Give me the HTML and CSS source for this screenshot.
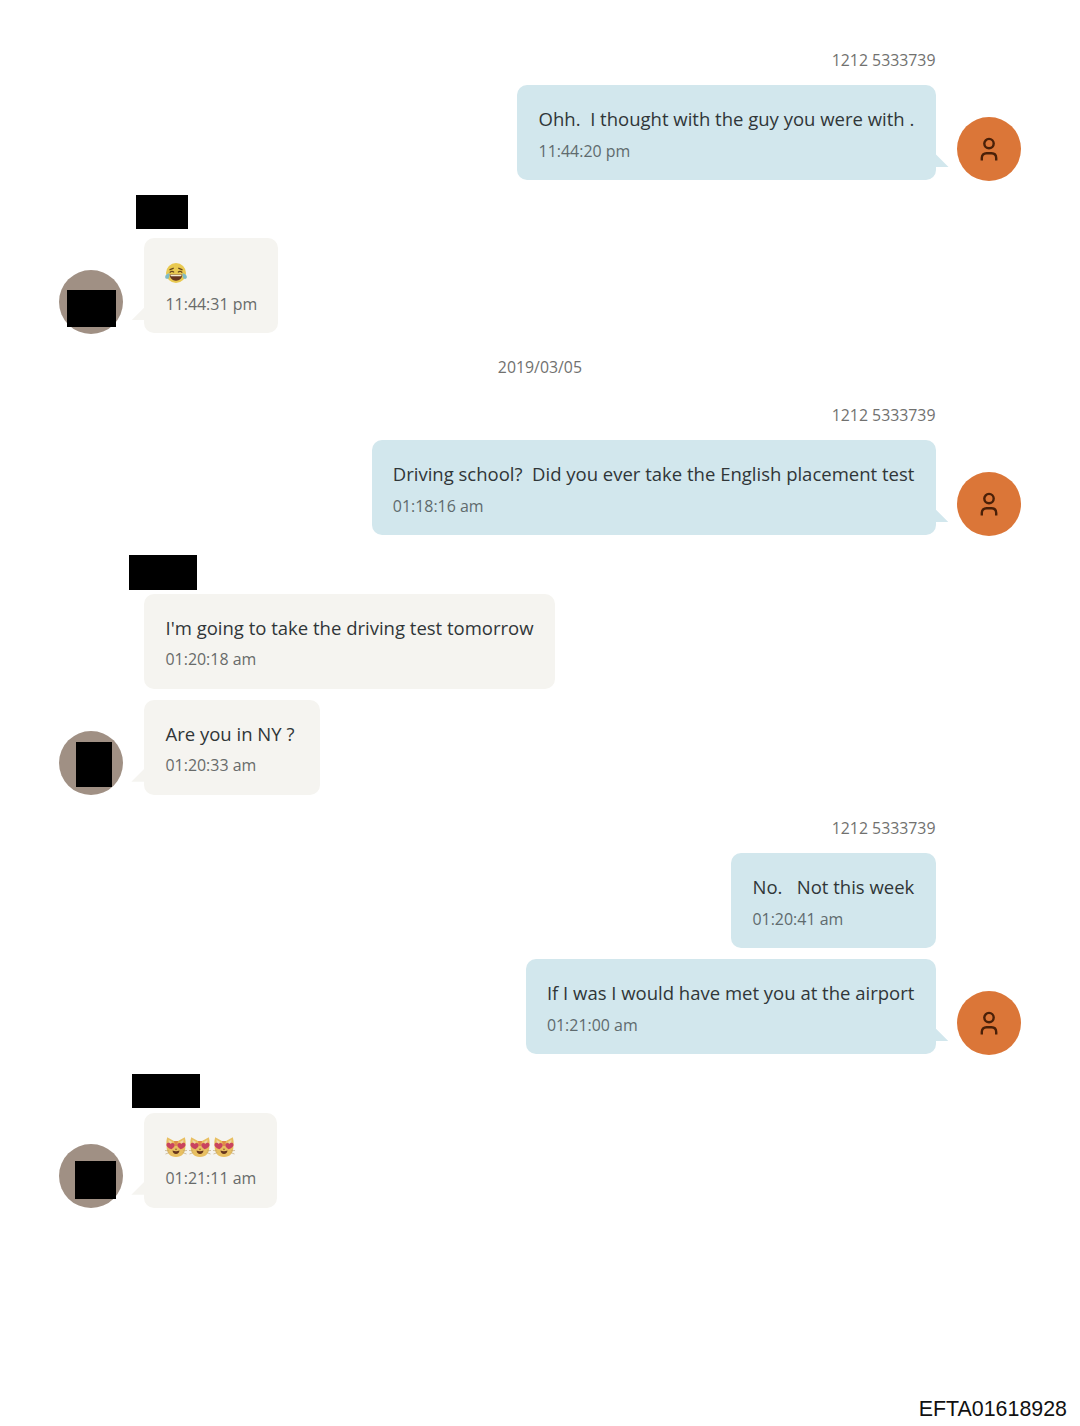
FILE: index.html
```html
<!DOCTYPE html>
<html lang="en">
<head>
<meta charset="utf-8">
<title>Messages</title>
<link rel="stylesheet" href="styles.css">
</head>
<body>
<svg class="defs" width="0" height="0" aria-hidden="true">
  <symbol id="person" viewBox="0 0 18 24">
    <circle cx="9" cy="6.6" r="4.700"/>
    <path d="M1.800 23.500v-2.500c0-3.200 2-4.800 4.700-4.800h5c2.700 0 4.700 1.600 4.700 4.800v2.500"/>
  </symbol>
  <symbol id="joy" viewBox="0 0 22 22">
    <circle cx="11" cy="11" r="10" fill="#e9c950"/>
    <path d="M4.500 7.800l4.200-1.600M13.300 6.200l4.200 1.600M4.800 10.600c1-1.700 3-1.700 4.200-.2M13 10.400c1.200-1.500 3.200-1.500 4.200.2" fill="none" stroke="#65451d" stroke-width="1.3"/>
    <path d="M4.600 12.500h12.800c-.5 4-2.800 6.200-6.400 6.200s-5.900-2.200-6.400-6.200z" fill="#66351d"/>
    <path d="M5.300 12.700h11.400l-.5 1.600H5.800z" fill="#f4ead0"/>
    <path d="M4.500 11.200C1 11.600-.3 14 .3 15.800c.8 2 3.600 1.300 4-1.100zM17.500 11.200c3.500.4 4.800 2.800 4.200 4.600-.8 2-3.600 1.300-4-1.100z" fill="#7fbcc5"/>
  </symbol>
  <symbol id="cat" viewBox="0 0 22 22">
    <path d="M2.200 1.200L9 5h4l6.800-3.800c1 3.500 1 6 .6 9.300C20.400 17.300 17 21 11 21S1.600 17.300 1.600 10.500c-.4-3.300-.4-5.800.6-9.300z" fill="#e8bf61"/>
    <path d="M3.500 3.700l3.700 2.200-3.300 3zM18.500 3.700l-3.700 2.200 3.300 3z" fill="#f0d7a5"/>
    <path d="M9 5h4l-1 5h-2z" fill="#df8b48"/>
    <path d="M6.400 13.300C2.500 11.800.9 9.800 1.600 7.900c.8-1.800 3.200-1.500 4 .2C7 6.300 9.600 6.800 9.700 9c0 1.600-1.300 3-3.300 4.300zM15.600 13.300c3.900-1.500 5.500-3.500 4.800-5.400-.8-1.800-3.200-1.500-4 .2C15 6.300 12.400 6.800 12.300 9c0 1.600 1.300 3 3.300 4.300z" fill="#c9435f"/>
    <path d="M7.500 14.600c2.300.8 4.700.8 7 0-.3 2.300-1.400 3.500-3.500 3.500s-3.200-1.200-3.500-3.500z" fill="#66351d"/>
    <path d="M9.800 12.700h2.400L11 14.200z" fill="#8b4d28"/>
    <path d="M0 14.500l4 .3M.5 18l3.800-1.400M22 14.500l-4 .3M21.500 18l-3.800-1.400" stroke="#b99c68" stroke-width=".6"/>
  </symbol>
</svg>
<main class="chat">
  <section class="group sent">
    <div class="name">1212 5333739</div>
    <div class="thread">
      <div class="bubble tail"><p class="text">Ohh.&nbsp; I thought with the guy you were with .</p><time>11:44:20 pm</time></div>
    </div>
    <div class="avatar"><svg><use href="#person"/></svg></div>
  </section>

  <section class="group received">
    <div class="name"><span class="redaction name-a"></span></div>
    <div class="avatar"><span class="redaction face-a"></span></div>
    <div class="thread">
      <div class="bubble tail"><p class="text emoji"><svg><use href="#joy"/></svg></p><time>11:44:31 pm</time></div>
    </div>
  </section>

  <div class="date">2019/03/05</div>

  <section class="group sent">
    <div class="name">1212 5333739</div>
    <div class="thread">
      <div class="bubble tail"><p class="text">Driving school?&nbsp; Did you ever take the English placement test</p><time>01:18:16 am</time></div>
    </div>
    <div class="avatar"><svg><use href="#person"/></svg></div>
  </section>

  <section class="group received">
    <div class="name"><span class="redaction name-b"></span></div>
    <div class="avatar"><span class="redaction face-b"></span></div>
    <div class="thread">
      <div class="bubble"><p class="text">I'm going to take the driving test tomorrow</p><time>01:20:18 am</time></div>
      <div class="bubble tail"><p class="text">Are you in NY ?&nbsp;</p><time>01:20:33 am</time></div>
    </div>
  </section>

  <section class="group sent">
    <div class="name">1212 5333739</div>
    <div class="thread">
      <div class="bubble"><p class="text">No.&nbsp;&nbsp; Not this week</p><time>01:20:41 am</time></div>
      <div class="bubble tail"><p class="text">If I was I would have met you at the airport</p><time>01:21:00 am</time></div>
    </div>
    <div class="avatar"><svg><use href="#person"/></svg></div>
  </section>

  <section class="group received">
    <div class="name"><span class="redaction name-c"></span></div>
    <div class="avatar"><span class="redaction face-c"></span></div>
    <div class="thread">
      <div class="bubble tail"><p class="text emoji"><svg><use href="#cat"/></svg><svg><use href="#cat"/></svg><svg><use href="#cat"/></svg></p><time>01:21:11 am</time></div>
    </div>
  </section>
</main>
<footer class="page-id">EFTA01618928</footer>
</body>
</html>
```
FILE: styles.css
```css
* { box-sizing: border-box; }

body {
  margin: 0;
  height: 1426px;
  display: flex;
  flex-direction: column;
  justify-content: space-between;
  background: #fff;
  color: #303638;
  font-family: "Open Sans", sans-serif;
}

.defs { position: absolute; }

.chat {
  display: flex;
  flex-direction: column;
  gap: 20.45px;
  padding: 47px 59.5px 0 59.3px;
}

.group {
  display: grid;
  column-gap: 21px;
  row-gap: 10px;
}

.sent { grid-template-columns: 1fr 64px; justify-items: end; }
.received { grid-template-columns: 64px 1fr; justify-items: start; }

.name, .date {
  height: 28px;
  line-height: 27px;
  font-size: 15.85px;
  color: #71716f;
}

.date { text-align: center; }
.name { position: relative; }
.sent .name { grid-column: 1; }
.received .name { grid-column: 2; }
.sent .thread, .sent .avatar { grid-row: 2; }

.thread {
  display: flex;
  flex-direction: column;
  gap: 11px;
  align-items: flex-start;
}

.sent .thread { align-items: flex-end; }

.bubble {
  position: relative;
  height: 95px;
  padding: 20px 21.2px;
  border-radius: 10px;
  background: #f5f4f0;
}

.sent .bubble { background: #d2e7ed; }

.tail::after {
  content: "";
  position: absolute;
  bottom: 13px;
  left: -13px;
  width: 13px;
  height: 13px;
  background: inherit;
  clip-path: polygon(100% 0, 100% 100%, 0 100%);
}

.sent .tail::after {
  left: auto;
  right: -13px;
  clip-path: polygon(0 0, 100% 100%, 0 100%);
}

.text {
  margin: 0;
  height: 28px;
  line-height: 28px;
  font-size: 18.5px;
  white-space: nowrap;
}

time {
  display: block;
  margin-top: 5.5px;
  line-height: 24px;
  font-size: 15.95px;
  color: #686b6a;
  white-space: nowrap;
}

.sent time { color: #5f6b6e; }

.emoji { display: flex; align-items: center; gap: 1.6px; padding-top: 1px; }
.emoji svg { width: 22px; height: 22px; }

.avatar {
  position: relative;
  align-self: end;
  top: 0.5px;
  display: flex;
  align-items: center;
  justify-content: center;
  width: 64px;
  height: 64px;
  border-radius: 50%;
  background: #a09084;
}

.sent .avatar { background: #db7638; }

.avatar svg {
  width: 18px;
  height: 24px;
  fill: none;
  stroke: #4a2008;
  stroke-width: 2.4;
}

.redaction { position: absolute; background: #000; }
.name-a { left: -8.5px; top: -5px; width: 52px; height: 34px; }
.name-b { left: -15.5px; top: -1.2px; width: 68px; height: 35px; }
.name-c { left: -12px; top: -1px; width: 68px; height: 34px; }
.face-a { left: 8.2px; top: 20px; width: 49px; height: 37.5px; }
.face-b { left: 17.2px; top: 11px; width: 36px; height: 45px; }
.face-c { left: 16.2px; top: 17px; width: 41px; height: 38px; }

.page-id {
  align-self: flex-end;
  padding: 0 13px 4px 0;
  font: 21.4px/26px "Liberation Sans", Arial, sans-serif;
  color: #111;
}
```
